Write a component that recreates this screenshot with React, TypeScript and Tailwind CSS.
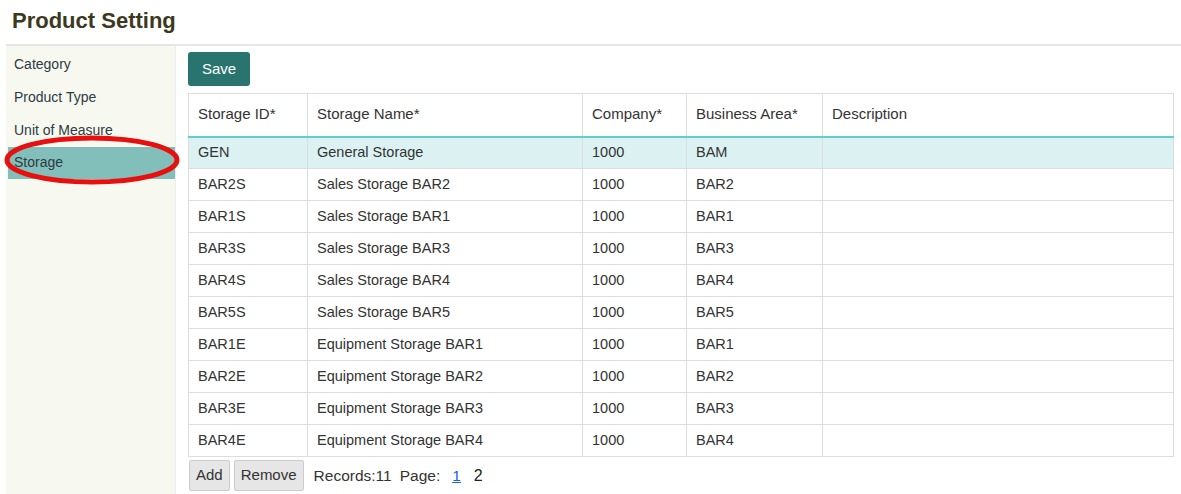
import React from 'react'

const rows = [
  { id: 'GEN', name: 'General Storage', company: '1000', area: 'BAM', desc: '' },
  { id: 'BAR2S', name: 'Sales Storage BAR2', company: '1000', area: 'BAR2', desc: '' },
  { id: 'BAR1S', name: 'Sales Storage BAR1', company: '1000', area: 'BAR1', desc: '' },
  { id: 'BAR3S', name: 'Sales Storage BAR3', company: '1000', area: 'BAR3', desc: '' },
  { id: 'BAR4S', name: 'Sales Storage BAR4', company: '1000', area: 'BAR4', desc: '' },
  { id: 'BAR5S', name: 'Sales Storage BAR5', company: '1000', area: 'BAR5', desc: '' },
  { id: 'BAR1E', name: 'Equipment Storage BAR1', company: '1000', area: 'BAR1', desc: '' },
  { id: 'BAR2E', name: 'Equipment Storage BAR2', company: '1000', area: 'BAR2', desc: '' },
  { id: 'BAR3E', name: 'Equipment Storage BAR3', company: '1000', area: 'BAR3', desc: '' },
  { id: 'BAR4E', name: 'Equipment Storage BAR4', company: '1000', area: 'BAR4', desc: '' },
]

const menu = ['Category', 'Product Type', 'Unit of Measure', 'Storage']

export default function App() {
  return (
    <div className="h-[494px] w-[1181px] overflow-hidden bg-white pl-[6px] font-['Liberation_Sans',Arial,sans-serif] text-[14px] text-[#333]">
      <h1 className="h-[44px] pl-[6px] pt-[7px] text-[22px] font-bold leading-[28px] text-[#3b3920]">Product Setting</h1>
      <div className="flex border-t-2 border-[#e6e6e6]">
        <aside className="relative h-[448px] w-[170px] shrink-0 border-r border-[#ececec] bg-[#f7f9f0] pt-[2px]">
          {menu.map((m) => (
            <div
              key={m}
              className={
                m === 'Storage'
                  ? 'ml-[2px] h-[32px] bg-[#82bfba] pl-[6px] leading-[31px] text-[#2e3a44]'
                  : 'h-[33px] pl-[8px] leading-[32px] text-[#2e3a44]'
              }
            >
              {m}
            </div>
          ))}
          <svg className="absolute left-[-3px] top-[88px]" width="178" height="52" viewBox="0 0 178 52">
            <ellipse cx="89" cy="26" rx="85" ry="22" fill="none" stroke="#e8100f" strokeWidth="5" />
          </svg>
        </aside>
        <main className="flex-1 pl-[12px] pr-[7px] pt-[6px]">
          <button className="h-[34px] rounded-[3px] bg-[#2a7470] px-[14px] text-[15px] text-white">Save</button>
          <table className="mt-[7px] w-[986px] table-fixed border-collapse border border-[#dddddd] text-[14.5px]">
            <colgroup>
              <col className="w-[119px]" />
              <col className="w-[275px]" />
              <col className="w-[104px]" />
              <col className="w-[136px]" />
              <col />
            </colgroup>
            <thead>
              <tr className="h-[43px] border-b-2 border-[#5fcfca] text-[15px]">
                {['Storage ID*', 'Storage Name*', 'Company*', 'Business Area*', 'Description'].map((h) => (
                  <th key={h} className="border-x border-[#dddddd] px-[9px] pb-[1px] text-left font-normal">
                    {h}
                  </th>
                ))}
              </tr>
            </thead>
            <tbody>
              {rows.map((r, i) => (
                <tr key={r.id} className={`h-[32px] border-b border-[#dddddd] ${i === 0 ? 'bg-[#dcf2f2]' : ''}`}>
                  <td className="border-x border-[#dddddd] px-[9px] pt-[1px]">{r.id}</td>
                  <td className="border-x border-[#dddddd] px-[9px] pt-[1px]">{r.name}</td>
                  <td className="border-x border-[#dddddd] px-[9px] pt-[1px]">{r.company}</td>
                  <td className="border-x border-[#dddddd] px-[9px] pt-[1px]">{r.area}</td>
                  <td className="border-x border-[#dddddd] px-[9px] pt-[1px]">{r.desc}</td>
                </tr>
              ))}
            </tbody>
          </table>
          <div className="mt-[3px] flex items-center gap-[4px] pl-[1px]">
            <button className="h-[31px] rounded-[2px] border border-[#cccccc] bg-[#e6e6e6] px-[6px] text-[15px] text-[#333]">Add</button>
            <button className="h-[31px] rounded-[2px] border border-[#cccccc] bg-[#e6e6e6] px-[6px] text-[15px] text-[#333]">Remove</button>
            <span className="ml-[6px] text-[15.5px]">Records:11</span>
            <span className="ml-[4px] text-[15.5px]">Page:</span>
            <a href="#" className="ml-[8px] text-[15.5px] text-[#1a5fd6] underline">1</a>
            <span className="ml-[9px] text-[16px] text-[#222]">2</span>
          </div>
        </main>
      </div>
    </div>
  )
}
